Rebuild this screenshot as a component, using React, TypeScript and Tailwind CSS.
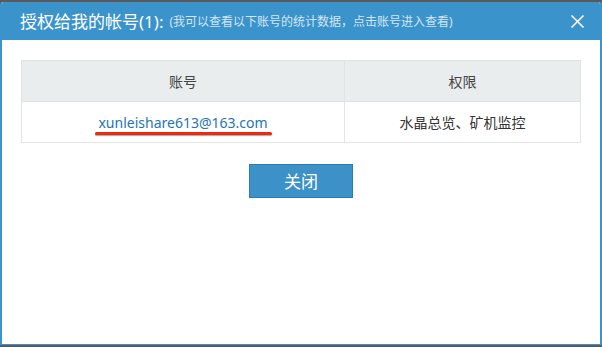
import React from 'react';

const font = { fontFamily: '"Noto Sans", "Noto Sans CJK SC", sans-serif' };

export default function App() {
  return (
    <div className="w-[602px] h-[347px] bg-[#5a5a5a] pt-[2px] pb-[2px] flex flex-col" style={font}>
      <div className="flex-1 flex flex-col bg-white border-l-[2px] border-r-[2px] border-b-[1px] border-[#3b93cb] rounded-t-[3px] overflow-hidden">
        {/* header */}
        <div className="h-[38px] bg-[#3b93cb] flex items-center pl-[18px] pr-[14px] text-white">
          <span className="text-[17px] leading-none">授权给我的帐号(1):</span>
          <span className="text-[12px] leading-none ml-[6px] text-[#d3e6f4] mt-[2px]">(我可以查看以下账号的统计数据，点击账号进入查看)</span>
          <button className="ml-auto w-[18px] h-[18px] flex items-center justify-center">
            <svg width="15" height="15" viewBox="0 0 15 15" fill="none" stroke="white" strokeWidth="1.6">
              <path d="M1.5 1.5 L13.5 13.5 M13.5 1.5 L1.5 13.5" />
            </svg>
          </button>
        </div>

        {/* body */}
        <div className="px-[19px] pt-[20px] flex flex-col items-center">
          <table className="w-[560px] border-collapse text-[14px] text-[#444]">
            <thead>
              <tr className="h-[41px] bg-[#e9edee]">
                <th className="w-[323px] border border-[#dfe3e4] font-normal">账号</th>
                <th className="border border-[#dfe3e4] font-normal">权限</th>
              </tr>
            </thead>
            <tbody>
              <tr className="h-[41px]">
                <td className="border border-[#e3e6e7] text-center">
                  <span className="relative inline-block">
                    <a className="text-[#1f74b5] text-[14px]">xunleishare613@163.com</a>
                    <span className="absolute left-[-3px] right-[-4px] bottom-[-2px] h-[3px] rounded-full bg-[#f0280f] shadow-[0_1px_1px_rgba(0,0,0,0.35)]" />
                  </span>
                </td>
                <td className="border border-[#e3e6e7] text-center text-[#333]">水晶总览、矿机监控</td>
              </tr>
            </tbody>
          </table>

          <button className="mt-[21px] w-[104px] h-[34px] bg-[#3c91c9] border border-[#2b7bb4] text-white text-[17px] leading-none">
            关闭
          </button>
        </div>
      </div>
    </div>
  );
}
